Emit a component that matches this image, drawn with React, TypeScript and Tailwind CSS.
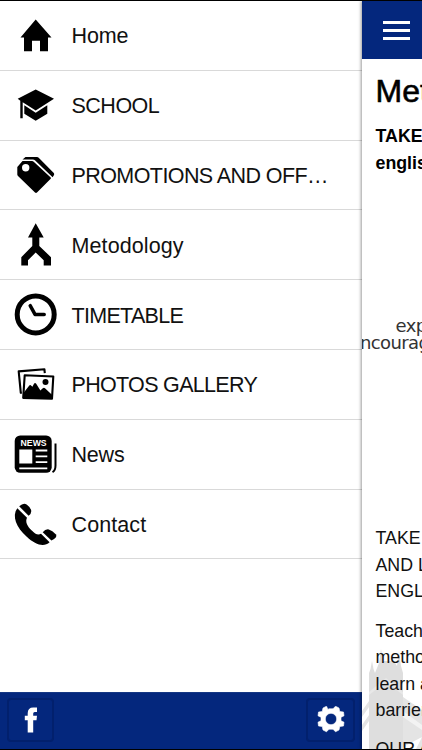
import type { ReactNode } from "react";

const Icon = ({ children }: { children: ReactNode }) => (
  <svg viewBox="-22 -22 44 44" className="h-11 w-11 shrink-0 overflow-visible" fill="#000">
    {children}
  </svg>
);

const items: { label: string; spacing: string; icon: ReactNode }[] = [
  {
    label: "Home",
    spacing: "tracking-[-0.1px]",
    icon: <path d="M-.3-16.4 15.5 1.5H12V15.3H4V4.8H-4V15.3H-12V1.5H-15.5Z" />,
  },
  {
    label: "SCHOOL",
    spacing: "tracking-[-0.5px]",
    icon: (
      <>
        <path d="M-.3-16.5 18-7.2-.3 4.5-13.3-3.8V12.2H-15.7V-5.2L-18.3-7.2Z" />
        <path d="M-11.7-.8-.3 6.7 11.3-.8V7.8L-.3 14.8-11.7 7.8Z" />
      </>
    ),
  },
  {
    label: "PROMOTIONS AND OFF…",
    spacing: "tracking-[-0.58px]",
    icon: (
      <>
        <path d="M-18.7-8-13.5-14H-4Q-3-14-2.3-13.3L14.7 2.6Q15.2 3.2 14.7 3.8L1 17.5Q0 18.4-1 17.5L-18 1Q-18.7.3-18.7-.6ZM-14-7.3A3.7 3.7 0 1 0-6.6-7.3 3.7 3.7 0 1 0-14-7.3Z" fillRule="evenodd" />
        <path d="M-13.5-15.6-10.5-18H1Q2-18 2.7-17.3L17.8-2Q18.5-1.2 18 0L16.6 2.3-.8-14.6Q-1.8-15.6-3.2-15.6Z" />
      </>
    ),
  },
  {
    label: "Metodology",
    spacing: "tracking-[0.1px]",
    icon: <path d="M-.3-21.8 7.7-7.4H3.3V1L15 12.2V20.5H7.7V15.3L-.3 7.5-8 15.3V20.5H-14.7V12.2L-3.7 1V-7.4H-8Z" />,
  },
  {
    label: "TIMETABLE",
    spacing: "tracking-[-0.7px]",
    icon: (
      <g fill="none" stroke="#000">
        <circle cx="-.3" cy="-.6" r="18.5" strokeWidth="5" />
        <path d="M-5.8-9.3-1-.6H8.2" strokeWidth="3.5" strokeLinecap="round" strokeLinejoin="round" />
      </g>
    ),
  },
  {
    label: "PHOTOS GALLERY",
    spacing: "tracking-[-0.68px]",
    icon: (
      <>
        <g fill="none" stroke="#000" strokeWidth="2.1" strokeLinejoin="round">
          <path d="M-14.1 7.8H-15.2L-17.3-13.6 8.4-15.8 8.8-11.8" />
          <path d="M-11.3-9.8 17.3-8.5 16 13.7-12.8 12.9Z" />
        </g>
        <path d="M-12.7 8.2-6.7.5Q-6-.2-5.2.3L-3.6 1.8-2-1.2Q-1-2.6.2-1.2L4.4 5.6 6.8 3.2Q8 2.2 9 3.2L16.2 10V13.5L-12.8 12.7Z" />
        <circle cx="9.5" cy="-3" r="3" />
      </>
    ),
  },
  {
    label: "News",
    spacing: "tracking-[-0.2px]",
    icon: (
      <>
        <rect x="-21.3" y="-19.5" width="37" height="37.3" rx="5.5" />
        <text x="-2.4" y="-8.9" textAnchor="middle" fill="#fff" fontSize="8.7" fontWeight="700">NEWS</text>
        <g fill="#fff">
          <path d="M-16.7-5.5H-3.7V8.5H-16.7Z" />
          <path d="M-.3-5.4H11.3V-3.6H-.3ZM-.3.4H11.3V2.2H-.3ZM-.3 6.3H11.3V8.1H-.3ZM-16.7 12.4H11.3V14.2H-16.7Z" />
        </g>
        <path d="M19.5-11.5V10.5Q19.5 15.5 16.5 17.2" fill="none" stroke="#000" strokeWidth="2" />
      </>
    ),
  },
  {
    label: "Contact",
    spacing: "tracking-[0.1px]",
    icon: (
      <>
        <path d="M-18.7-15.8C-24.5-8-19.5 3.5-9.5 12.5-.5 21 8 23.5 13.6 18.2L5 9.8C2 11.7-.8 10-4.5 6.3-8.7 2.2-11-2.2-9-6.2Z" />
        <path d="M-16.8-17.7Q-12.5-21.7-9.4-19.5-5.5-16.8-4.8-13.6-4.3-10.5-7.4-8.2Z" />
        <path d="M6.7 8.2Q9.5 4.8 12.8 5.4 16.4 6.2 20 10.6 21.8 13.4 15.4 16.6Z" />
      </>
    ),
  },
];

function Tower() {
  return (
    <svg viewBox="0 0 60 110" className="absolute bottom-0 left-0 h-[110px] w-[60px]">
      <path d="M0 72 7 62V68L0 78ZM0 86 7 76V82L0 92Z" fill="#e4e4e4" />
      <path d="M41 58 60 71V110H54L60 98 41 108Z" fill="#e4e4e4" />
      <path d="M41 72 60 86V91L41 78Z" fill="#f3f3f3" />
      <path d="M7 110V34L8.5 30 10 22 11.5 30 13 34 17 24 19 10 21 22H32L35 27 37 12 39 27 41 34V110Z" fill="#dedede" />
      <path d="M7 53 24 39 41 53V56L24 43 7 56Z" fill="#e8e8e8" />
    </svg>
  );
}

export default function App() {
  return (
    <div className="relative flex h-[750px] w-[422px] overflow-hidden border-y border-black bg-white font-['Liberation_Sans',Arial,sans-serif] text-[#111]">
      <aside className="flex w-[362px] shrink-0 flex-col">
        <nav className="flex-1">
          {items.map(({ label, icon, spacing }) => (
            <a key={label} className="flex h-[69.8px] items-center border-b border-[#d9d9d9] pl-[14px] pt-px">
              <Icon>{icon}</Icon>
              <span className={`ml-[13.5px] mt-px whitespace-nowrap text-[21.5px] leading-7 ${spacing}`}>{label}</span>
            </a>
          ))}
        </nav>
        <footer className="flex h-[57px] items-center justify-between border-t border-[#153783] bg-[#04277d] px-[7px] pb-[2px]">
          <button className="flex h-[44px] w-[47px] items-center justify-center rounded-sm border-2 border-[#02206d]">
            <svg viewBox="0 0 14 26" className="h-[26px] w-[14px]" fill="#fff">
              <path d="M3.7 25.5V13.3H.8V8.8H3.7V6.2Q3.7.6 9.3.6H13V5H10.7Q9.2 5 9.2 6.5V8.8H13L12.5 13.3H9.2V25.5Z" />
            </svg>
          </button>
          <button className="flex h-[44px] w-[49px] items-center justify-center rounded-sm border-2 border-[#02206d]">
            <svg viewBox="-14 -13 28 28" className="h-7 w-7" fill="#fff" stroke="#fff" strokeWidth=".6" strokeLinejoin="round">
              <path fillRule="evenodd" d="M-3-9.6-4.5-12.8-8-11-8.8-7.5-12.5-7-13-3.2-10-1.7V1.7L-13 3.2-12.5 7-8.8 7.5-8 11-4.5 12.8-2 10.2H2L4.5 12.8 8 11 8.8 7.5 12.5 7 13 3.2 10 1.7V-1.7L13-3.2 12.5-7 8.8-7.5 8-11 4.5-12.8 2-10.2H-2ZM0-5.7A5.7 5.7 0 1 1 0 5.7 5.7 5.7 0 1 1 0-5.7Z" />
            </svg>
          </button>
        </footer>
      </aside>
      <main className="relative w-[60px] shrink-0 overflow-hidden bg-white shadow-[-1px_0_3px_rgba(0,0,0,0.4)]">
        <Tower />
        <header className="relative flex h-[58px] items-center bg-[#04277d] pl-[21px]">
          <div className="flex flex-col gap-[5px]">
            <span className="h-[3px] w-[27px] bg-white" />
            <span className="h-[3px] w-[27px] bg-white" />
            <span className="h-[3px] w-[27px] bg-white" />
          </div>
        </header>
        <div className="relative whitespace-nowrap pl-[13.5px] text-[17.8px] leading-[26.5px]">
          <h1 className="mt-[11px] text-[32px] leading-[42px] text-black [-webkit-text-stroke:0.6px_#000]">Methodology</h1>
          <p className="mt-[11px] font-bold text-black">TAKE OFF<br />english</p>
          <div className="-ml-[16px] mt-[141px] font-['DejaVu_Sans',sans-serif] text-[18px] leading-[17px] tracking-[-0.6px] text-[#333]">
            <div className="pl-[36px]">explore</div>
            <div className="-ml-[10px]">encourage</div>
          </div>
          <p className="mt-[174px]">TAKE OFF<br />AND LEARN<br />ENGLISH</p>
          <p className="mt-[13px]">Teaching<br />methods<br />learn and<br />barriers</p>
          <p className="mt-[12px]">OUR AIM</p>
        </div>
      </main>
    </div>
  );
}
